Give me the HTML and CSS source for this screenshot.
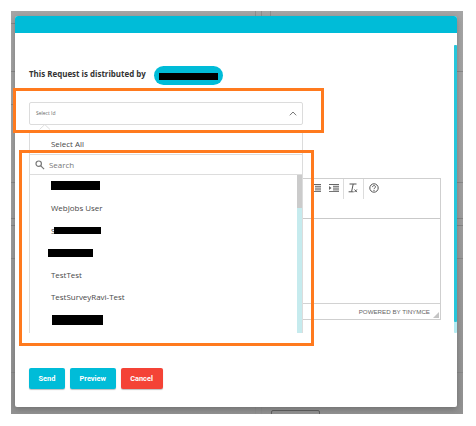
FILE: index.html
```html
<!DOCTYPE html>
<html lang="en">
<head>
<meta charset="utf-8">
<title>Distribute request</title>
<link rel="stylesheet" href="styles.css">
</head>
<body>
<div class="page">
  <i class="rule r1"></i><i class="rule r2"></i><i class="rule r3"></i><i class="rule r4"></i><i class="rule r5"></i><i class="rule r6"></i><i class="rule r7"></i>
  <i class="column c1"></i><i class="column c2"></i><i class="column c3"></i><i class="ghost"></i>
  <main class="modal">
    <header class="modal-header"></header>
    <div class="modal-body">
      <div class="heading">
        <span class="title">This Request is distributed by</span>
        <span class="pill"><span class="redacted"></span></span>
      </div>
      <div class="select">
        <div class="field">
          <span>Select Id</span>
          <svg class="chevron" viewBox="0 0 8 5"><path d="M.8 4.300 4 1l3.200 3.300"/></svg>
        </div>
        <div class="dropdown">
          <svg class="pointer" viewBox="0 0 12 6"><path d="M.5 5.500 5.800.5l5.200 5"/></svg>
          <div class="select-all">Select All</div>
          <div class="search">
            <svg viewBox="0 0 10 10"><circle cx="3.700" cy="3.700" r="2.700"/><path d="m5.800 5.800 3.300 3.300"/></svg>
            <span>Search</span>
          </div>
          <div class="options">
            <ul>
              <li><span class="redacted o1"></span></li>
              <li><span class="name">WebJobs User</span></li>
              <li><span class="name">S</span><span class="redacted o2"></span></li>
              <li><span class="redacted o3"></span></li>
              <li><span class="name">TestTest</span></li>
              <li><span class="name raised">TestSurveyRavi-Test</span></li>
              <li><span class="redacted o4"></span></li>
            </ul>
            <div class="track"><div class="thumb"></div></div>
          </div>
        </div>
      </div>
      <section class="editor">
        <div class="toolbar">
          <svg class="tool" viewBox="0 0 10 8"><path d="M0 .5h10M4 2.300h6M4 4.100h6M4 5.900h6M0 7.600h10"/><path class="solid" d="M3 2v4L.5 4z"/></svg>
          <svg class="tool" viewBox="0 0 10 8"><path d="M0 .5h10M4 2.300h6M4 4.100h6M4 5.900h6M0 7.600h10"/><path class="solid" d="M0 2v4l2.500-2z"/></svg>
          <i class="divider d1"></i>
          <svg class="clear" viewBox="0 0 10 10"><path d="M1.500 1h7M5.200 1 3.600 8.600M.6 8.800h5M6.500 6.500l2.400 2.600M8.900 6.500 6.500 9.100"/></svg>
          <i class="divider"></i>
          <svg class="help" viewBox="0 0 10 10"><circle cx="5" cy="5" r="4.200"/><path d="M3.500 4.100c0-2 3-2 3-.2C6.500 5 5 5 5 6.200M5 7v1"/></svg>
        </div>
        <div class="content"></div>
        <div class="status"><span>POWERED BY TINYMCE</span><svg viewBox="0 0 6 6"><path d="M6 0v6H0z"/></svg></div>
      </section>
      <div class="actions">
        <button class="send">Send</button>
        <button class="preview">Preview</button>
        <button class="cancel">Cancel</button>
      </div>
    </div>
    <div class="modal-track"><div class="modal-thumb"></div></div>
  </main>
</div>
<div class="highlight h-field"></div>
<div class="highlight h-list"></div>
</body>
</html>
```
FILE: styles.css
```css
* { box-sizing: border-box; }
body { margin: 0; width: 476px; height: 426px; padding: 11px; background: #fff; overflow: hidden; position: relative; font-family: "Open Sans", sans-serif; color: #484848; }
.page { position: relative; width: 452px; height: 402.500px; padding: 5px 6px 6px 4px; background: linear-gradient(#a5a5a5, #a0a0a0 45%, #929292); overflow: hidden; }
.rule { position: absolute; left: 0; right: 0; height: 1px; background: #898989; }
.r1 { top: 12px; right: 440px; }
.r2 { top: 60px; }
.r3 { top: 93px; right: 440px; }
.r4 { top: 171px; }
.r5 { top: 207px; height: 8px; background: none; border: solid #858585; border-width: 1px 0; }
.r6 { top: 247px; }
.r7 { top: 361px; }
.column { position: absolute; top: 0; bottom: 0; width: 1px; background: #8f8f8f; }
.c1 { left: 244px; }
.c2 { left: 250px; }
.c3 { left: 259px; height: 8px; }
.ghost { position: absolute; left: 260px; top: 399px; width: 49px; height: 8px; border: 1px solid #606060; border-radius: 2px; }
.modal { position: relative; width: 442px; height: 391px; background: #fff; border-radius: 3px 3px 2px 2px; box-shadow: 0 2px 6px rgba(0,0,0,.25); }
.modal-header { height: 17px; background: #00bcd8; border-radius: 3px 3px 0 0; }
.modal-body { padding: 33px 16px 0 14px; }
.heading { display: flex; height: 18px; gap: 9px; }
.title { width: 116px; font-size: 7.950px; line-height: 16px; font-weight: 700; color: #333; white-space: nowrap; }
.pill { width: 69px; height: 18.500px; border-radius: 10px; background: #00bcd8; padding: 7px 5px; }
.redacted { display: block; background: #000; height: 7px; }
.select { position: relative; width: 274px; margin-top: 18px; }
.field { height: 22.500px; display: flex; justify-content: space-between; align-items: center; padding: 0 5px 0 6px; border: 1px solid #dcdcdc; border-radius: 2px; font-size: 5px; color: #666; }
svg { fill: none; stroke: #777; stroke-width: 1; display: block; }
.chevron { width: 8px; height: 5px; }
.dropdown { position: absolute; z-index: 2; left: 0; top: 31px; width: 274px; height: 200px; background: #fff; border: solid #dcdcdc; border-width: 0 1px; font-size: 7.950px; white-space: nowrap; }
.pointer { position: absolute; left: 9px; top: -9px; width: 12px; height: 6px; stroke: #dedede; }
.select-all { height: 21px; padding-left: 21px; line-height: 22px; }
.search { height: 21px; display: flex; align-items: center; gap: 4px; padding-left: 5px; border: solid #ddd; border-width: 1px 0; color: #777; }
.search svg { width: 10px; height: 10px; stroke-width: 1.200; }
.options { display: flex; justify-content: space-between; height: 158px; }
.options ul { list-style: none; margin: 0; padding: 0 0 0 21px; }
.options li { display: flex; align-items: center; height: 22.300px; }
.raised { padding-bottom: 2px; }
.o1 { width: 49px; height: 9px; margin-bottom: 1px; }
.o2 { width: 47px; margin-left: -1px; }
.o3 { width: 45px; height: 8px; margin-left: -3px; }
.o4 { width: 51px; height: 10px; margin-left: 1px; }
.track { width: 5px; height: 158px; background: #c6ebee; }
.thumb { height: 33px; background: #cbcbcb; }
.editor { width: 412px; height: 142px; margin-top: 53.500px; border: 1px solid #cfcfcf; }
.toolbar { height: 39.500px; display: flex; align-items: flex-start; padding: 5px 0 0 281px; border-bottom: 1px solid #c9c9c9; }
.tool { width: 10px; height: 8px; margin-right: 8px; stroke: #666; }
.tool .solid { fill: #666; stroke: none; }
.divider { width: 1px; height: 20px; margin-top: -5px; background: #dcdcdc; }
.d1 { margin-left: -4px; }
.clear { width: 10px; height: 10px; margin: -1px 5px 0 4px; stroke: #555; }
.help { width: 10px; height: 10px; margin: -1px 0 0 5px; stroke: #555; }
.content { height: 84.500px; }
.status { height: 17px; display: flex; align-items: center; justify-content: flex-end; gap: 3px; padding-right: 1px; border-top: 1px solid #d2d2d2; font: 6.200px "Liberation Sans", sans-serif; color: #666; }
.status span { margin-top: -2px; }
.status svg { width: 6px; height: 6px; align-self: flex-end; margin-bottom: 2px; fill: #c4c4c4; stroke: none; }
.actions { display: flex; gap: 4.500px; margin-top: 48px; }
button { height: 21px; padding: 0; border: 0; border-radius: 2px; background: #00bcd8; color: #fff; font: 700 7.400px Roboto, sans-serif; box-shadow: 0 1px 1px rgba(0,0,0,.25); }
.send { width: 36px; }
.preview { width: 46.500px; }
.cancel { width: 42px; background: #f44336; }
.modal-track { position: absolute; right: 0; top: 29px; width: 3.500px; height: 288px; background: #b2ebf2; border-radius: 1px; }
.modal-thumb { height: 277px; background: #26c6da; border-radius: 1px; }
.highlight { position: absolute; z-index: 5; border: 3px solid #ff7a1e; }
.h-field { left: 13px; top: 87.500px; width: 311px; height: 45px; }
.h-list { left: 19px; top: 150px; width: 295px; height: 196px; }
```
